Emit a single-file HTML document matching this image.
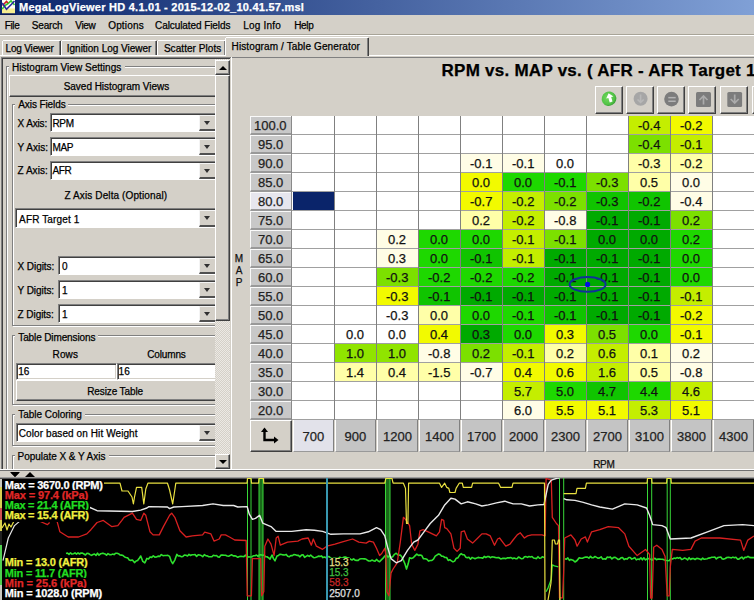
<!DOCTYPE html><html><head><meta charset="utf-8"><style>
*{box-sizing:border-box}
body{margin:0;width:754px;height:600px;overflow:hidden;background:#d4d0c8;font-family:"Liberation Sans",sans-serif;font-size:11px;color:#000;position:relative}
.a{position:absolute}
.t{position:absolute;white-space:nowrap;line-height:1;-webkit-text-stroke:0.25px currentColor}

</style></head><body>
<div class="a" style="left:0px;top:0px;width:754px;height:15px;background:linear-gradient(90deg,#0a246a 0%,#80a0d6 100%)"></div>
<svg class="a" style="left:0;top:0" width="17" height="15" viewBox="0 0 17 15">
<rect x="2" y="0" width="13" height="13.4" fill="#fffdf4"/>
<rect x="2" y="8.5" width="13" height="4.9" fill="#f6ee90"/>
<polyline points="2.2,9 5,5.5 8,3.5 11,0.8 14.5,5" fill="none" stroke="#30c830" stroke-width="1.6"/>
<polyline points="2.5,5.5 6.5,1.5 8,3" fill="none" stroke="#d02020" stroke-width="1.6"/>
<polyline points="2.2,3 6.5,9.3 11.5,4.2 14.5,1" fill="none" stroke="#2a2aa0" stroke-width="1.6"/>
<rect x="1.5" y="13.4" width="14" height="1.6" fill="#0a1a50"/>
</svg>
<div class="t" style="left:19.00px;top:2px;font-size:11px;font-weight:bold;color:#fff;letter-spacing:0.246px;">MegaLogViewer HD 4.1.01 - 2015-12-02_10.41.57.msl</div>
<div class="t" style="left:4.70px;top:21px;font-size:10px;color:#000;letter-spacing:-0.350px;">File</div>
<div class="t" style="left:31.80px;top:21px;font-size:10px;color:#000;letter-spacing:-0.160px;">Search</div>
<div class="t" style="left:75.30px;top:21px;font-size:10px;color:#000;letter-spacing:-0.350px;">View</div>
<div class="t" style="left:108.20px;top:21px;font-size:10px;color:#000;letter-spacing:0.167px;">Options</div>
<div class="t" style="left:155.10px;top:21px;font-size:10px;color:#000;letter-spacing:-0.088px;">Calculated Fields</div>
<div class="t" style="left:243.30px;top:21px;font-size:10px;color:#000;letter-spacing:0.186px;">Log Info</div>
<div class="t" style="left:294.20px;top:21px;font-size:10px;color:#000;letter-spacing:-0.350px;">Help</div>
<div class="a" style="left:0px;top:34px;width:754px;height:1px;background:#a8a498"></div>
<div class="a" style="left:0px;top:35px;width:754px;height:1px;background:#fff"></div>
<div class="a" style="left:3px;top:40px;width:57px;height:1px;background:#fff"></div>
<div class="a" style="left:2px;top:41px;width:1px;height:15px;background:#fff"></div>
<div class="a" style="left:60px;top:41px;width:1px;height:15px;background:#404040"></div>
<div class="a" style="left:59px;top:41px;width:1px;height:15px;background:#808080"></div>
<div class="t" style="left:5.50px;top:44px;font-size:10px;color:#000;letter-spacing:-0.167px;">Log Viewer</div>
<div class="a" style="left:62px;top:40px;width:94px;height:1px;background:#fff"></div>
<div class="a" style="left:61px;top:41px;width:1px;height:15px;background:#fff"></div>
<div class="a" style="left:156px;top:41px;width:1px;height:15px;background:#404040"></div>
<div class="a" style="left:155px;top:41px;width:1px;height:15px;background:#808080"></div>
<div class="t" style="left:66.80px;top:44px;font-size:10px;color:#000;letter-spacing:-0.017px;">Ignition Log Viewer</div>
<div class="a" style="left:158px;top:40px;width:67px;height:1px;background:#fff"></div>
<div class="a" style="left:157px;top:41px;width:1px;height:15px;background:#fff"></div>
<div class="a" style="left:225px;top:41px;width:1px;height:15px;background:#404040"></div>
<div class="a" style="left:224px;top:41px;width:1px;height:15px;background:#808080"></div>
<div class="t" style="left:163.90px;top:44px;font-size:10px;color:#000;letter-spacing:0.058px;">Scatter Plots</div>
<div class="a" style="left:0px;top:55px;width:754px;height:1px;background:#fff"></div>
<div class="a" style="left:225px;top:37px;width:144px;height:20px;background:#d4d0c8"></div>
<div class="a" style="left:226px;top:37px;width:142px;height:1px;background:#fff"></div>
<div class="a" style="left:225px;top:38px;width:1px;height:18px;background:#fff"></div>
<div class="a" style="left:368px;top:38px;width:1px;height:18px;background:#404040"></div>
<div class="a" style="left:367px;top:38px;width:1px;height:18px;background:#808080"></div>
<div class="t" style="left:231.60px;top:42px;font-size:10px;color:#000;letter-spacing:0.112px;">Histogram / Table Generator</div>
<div class="a" style="left:231px;top:57px;width:523px;height:1px;background:#808080"></div>
<div class="a" style="left:1px;top:57px;width:1px;height:413px;background:#808080"></div>
<div class="a" style="left:2px;top:58px;width:1px;height:412px;background:#404040"></div>
<div class="a" style="left:1px;top:57px;width:230px;height:1px;background:#808080"></div>
<div class="a" style="left:2px;top:58px;width:228px;height:1px;background:#404040"></div>
<div class="a" style="left:231px;top:57px;width:1px;height:413px;background:#fff"></div>
<div class="a" style="left:3px;top:59px;width:212px;height:410px;overflow:hidden">
<div class="a" style="left:-3px;top:-59px;width:300px;height:600px">
<div class="a" style="left:6px;top:66px;width:260px;height:500px;border:1px solid #808080;box-shadow:1px 1px 0 #fff, inset 1px 1px 0 #fff"></div>
<div class="a" style="left:9px;top:61px;width:115.5px;height:12px;background:#d4d0c8"></div>
<div class="t" style="left:12.00px;top:63px;font-size:10px;letter-spacing:0.023px;">Histogram View Settings</div>
<div class="a" style="left:9px;top:75px;width:215px;height:22px;background:#d4d0c8;border-top:1px solid #fff;border-left:1px solid #fff;border-right:1px solid #404040;border-bottom:1px solid #404040;box-shadow:inset -1px -1px 0 #808080"></div>
<div class="t" style="left:63.70px;top:82px;font-size:10px;letter-spacing:-0.025px;">Saved Histogram Views</div>
<div class="a" style="left:12px;top:104px;width:250px;height:222px;border:1px solid #808080;box-shadow:1px 1px 0 #fff, inset 1px 1px 0 #fff"></div>
<div class="a" style="left:15.3px;top:98px;width:53px;height:12px;background:#d4d0c8"></div>
<div class="t" style="left:18.30px;top:100px;font-size:10px;letter-spacing:-0.100px;">Axis Fields</div>
<div class="t" style="left:17.50px;top:119px;font-size:10px;letter-spacing:-0.133px;">X Axis:</div>
<div class="a" style="left:50px;top:113px;width:165px;height:19px;background:#fff;border-top:1px solid #808080;border-left:1px solid #808080;border-bottom:1px solid #fff;box-shadow:inset 1px 1px 0 #404040"></div>
<div class="a" style="left:199px;top:115px;width:16px;height:16px;background:#d4d0c8;border-top:1px solid #f4f4f4;border-left:1px solid #f4f4f4;border-bottom:2px solid #505050"></div>
<div class="a" style="left:203.5px;top:120.5px;width:0px;height:0px;border-left:3.5px solid transparent;border-right:3.5px solid transparent;border-top:4px solid #303030"></div>
<div class="t" style="left:52.50px;top:119px;font-size:10px;letter-spacing:-0.350px;">RPM</div>
<div class="t" style="left:17.50px;top:143px;font-size:10px;letter-spacing:0.033px;">Y Axis:</div>
<div class="a" style="left:50px;top:137px;width:165px;height:19px;background:#fff;border-top:1px solid #808080;border-left:1px solid #808080;border-bottom:1px solid #fff;box-shadow:inset 1px 1px 0 #404040"></div>
<div class="a" style="left:199px;top:139px;width:16px;height:16px;background:#d4d0c8;border-top:1px solid #f4f4f4;border-left:1px solid #f4f4f4;border-bottom:2px solid #505050"></div>
<div class="a" style="left:203.5px;top:144.5px;width:0px;height:0px;border-left:3.5px solid transparent;border-right:3.5px solid transparent;border-top:4px solid #303030"></div>
<div class="t" style="left:52.50px;top:143px;font-size:10px;letter-spacing:-0.350px;">MAP</div>
<div class="t" style="left:17.50px;top:166px;font-size:10px;letter-spacing:0.033px;">Z Axis:</div>
<div class="a" style="left:50px;top:161px;width:165px;height:19px;background:#fff;border-top:1px solid #808080;border-left:1px solid #808080;border-bottom:1px solid #fff;box-shadow:inset 1px 1px 0 #404040"></div>
<div class="a" style="left:199px;top:163px;width:16px;height:16px;background:#d4d0c8;border-top:1px solid #f4f4f4;border-left:1px solid #f4f4f4;border-bottom:2px solid #505050"></div>
<div class="a" style="left:203.5px;top:168.5px;width:0px;height:0px;border-left:3.5px solid transparent;border-right:3.5px solid transparent;border-top:4px solid #303030"></div>
<div class="t" style="left:52.50px;top:166px;font-size:10px;letter-spacing:-0.350px;">AFR</div>
<div class="t" style="left:64.50px;top:191px;font-size:10px;letter-spacing:0.114px;">Z Axis Delta (Optional)</div>
<div class="a" style="left:15px;top:208px;width:200px;height:20px;background:#fff;border-top:1px solid #808080;border-left:1px solid #808080;border-bottom:1px solid #fff;box-shadow:inset 1px 1px 0 #404040"></div>
<div class="a" style="left:199px;top:210px;width:16px;height:17px;background:#d4d0c8;border-top:1px solid #f4f4f4;border-left:1px solid #f4f4f4;border-bottom:2px solid #505050"></div>
<div class="a" style="left:203.5px;top:216.0px;width:0px;height:0px;border-left:3.5px solid transparent;border-right:3.5px solid transparent;border-top:4px solid #303030"></div>
<div class="t" style="left:19.10px;top:215px;font-size:10px;letter-spacing:0.136px;">AFR Target 1</div>
<div class="t" style="left:17.50px;top:262px;font-size:10px;letter-spacing:-0.050px;">X Digits:</div>
<div class="a" style="left:58px;top:256px;width:157px;height:19px;background:#fff;border-top:1px solid #808080;border-left:1px solid #808080;border-bottom:1px solid #fff;box-shadow:inset 1px 1px 0 #404040"></div>
<div class="a" style="left:199px;top:258px;width:16px;height:16px;background:#d4d0c8;border-top:1px solid #f4f4f4;border-left:1px solid #f4f4f4;border-bottom:2px solid #505050"></div>
<div class="a" style="left:203.5px;top:263.5px;width:0px;height:0px;border-left:3.5px solid transparent;border-right:3.5px solid transparent;border-top:4px solid #303030"></div>
<div class="t" style="left:62.00px;top:262px;font-size:10px;">0</div>
<div class="t" style="left:17.50px;top:286px;font-size:10px;letter-spacing:-0.050px;">Y Digits:</div>
<div class="a" style="left:58px;top:280px;width:157px;height:19px;background:#fff;border-top:1px solid #808080;border-left:1px solid #808080;border-bottom:1px solid #fff;box-shadow:inset 1px 1px 0 #404040"></div>
<div class="a" style="left:199px;top:282px;width:16px;height:16px;background:#d4d0c8;border-top:1px solid #f4f4f4;border-left:1px solid #f4f4f4;border-bottom:2px solid #505050"></div>
<div class="a" style="left:203.5px;top:287.5px;width:0px;height:0px;border-left:3.5px solid transparent;border-right:3.5px solid transparent;border-top:4px solid #303030"></div>
<div class="t" style="left:62.00px;top:286px;font-size:10px;">1</div>
<div class="t" style="left:17.50px;top:310px;font-size:10px;letter-spacing:-0.050px;">Z Digits:</div>
<div class="a" style="left:58px;top:304px;width:157px;height:19px;background:#fff;border-top:1px solid #808080;border-left:1px solid #808080;border-bottom:1px solid #fff;box-shadow:inset 1px 1px 0 #404040"></div>
<div class="a" style="left:199px;top:306px;width:16px;height:16px;background:#d4d0c8;border-top:1px solid #f4f4f4;border-left:1px solid #f4f4f4;border-bottom:2px solid #505050"></div>
<div class="a" style="left:203.5px;top:311.5px;width:0px;height:0px;border-left:3.5px solid transparent;border-right:3.5px solid transparent;border-top:4px solid #303030"></div>
<div class="t" style="left:62.00px;top:310px;font-size:10px;">1</div>
<div class="a" style="left:12px;top:335px;width:250px;height:70px;border:1px solid #808080;box-shadow:1px 1px 0 #fff, inset 1px 1px 0 #fff"></div>
<div class="a" style="left:15.3px;top:331px;width:83.2px;height:12px;background:#d4d0c8"></div>
<div class="t" style="left:18.30px;top:333px;font-size:10px;letter-spacing:-0.120px;">Table Dimensions</div>
<div class="t" style="left:52.50px;top:350px;font-size:10px;letter-spacing:0.167px;">Rows</div>
<div class="t" style="left:147.30px;top:350px;font-size:10px;letter-spacing:-0.150px;">Columns</div>
<div class="a" style="left:16px;top:363px;width:101px;height:17px;background:#fff;border-top:1px solid #808080;border-left:1px solid #808080;border-right:1px solid #fff;border-bottom:1px solid #fff;box-shadow:inset 1px 1px 0 #404040, inset -1px -1px 0 #d4d0c8"></div>
<div class="a" style="left:117px;top:363px;width:110px;height:17px;background:#fff;border-top:1px solid #808080;border-left:1px solid #808080;border-right:1px solid #fff;border-bottom:1px solid #fff;box-shadow:inset 1px 1px 0 #404040, inset -1px -1px 0 #d4d0c8"></div>
<div class="t" style="left:18.30px;top:367px;font-size:10px;">16</div>
<div class="t" style="left:118.60px;top:367px;font-size:10px;">16</div>
<div class="a" style="left:16px;top:380px;width:210px;height:21px;background:#d4d0c8;border-top:1px solid #fff;border-left:1px solid #fff;border-right:1px solid #404040;border-bottom:1px solid #404040;box-shadow:inset -1px -1px 0 #808080"></div>
<div class="t" style="left:87.20px;top:387px;font-size:10px;letter-spacing:-0.109px;">Resize Table</div>
<div class="a" style="left:12px;top:414px;width:250px;height:32px;border:1px solid #808080;box-shadow:1px 1px 0 #fff, inset 1px 1px 0 #fff"></div>
<div class="a" style="left:15.3px;top:408px;width:69.7px;height:12px;background:#d4d0c8"></div>
<div class="t" style="left:18.30px;top:410px;font-size:10px;letter-spacing:-0.023px;">Table Coloring</div>
<div class="a" style="left:16px;top:423px;width:199px;height:19px;background:#fff;border-top:1px solid #808080;border-left:1px solid #808080;border-bottom:1px solid #fff;box-shadow:inset 1px 1px 0 #404040"></div>
<div class="a" style="left:199px;top:425px;width:16px;height:16px;background:#d4d0c8;border-top:1px solid #f4f4f4;border-left:1px solid #f4f4f4;border-bottom:2px solid #505050"></div>
<div class="a" style="left:203.5px;top:430.5px;width:0px;height:0px;border-left:3.5px solid transparent;border-right:3.5px solid transparent;border-top:4px solid #303030"></div>
<div class="t" style="left:18.80px;top:429px;font-size:10px;letter-spacing:0.092px;">Color based on Hit Weight</div>
<div class="a" style="left:12px;top:455px;width:250px;height:60px;border:1px solid #808080;box-shadow:1px 1px 0 #fff, inset 1px 1px 0 #fff"></div>
<div class="a" style="left:14.5px;top:450px;width:94.3px;height:12px;background:#d4d0c8"></div>
<div class="t" style="left:17.50px;top:452px;font-size:10px;letter-spacing:-0.039px;">Populate X &amp; Y Axis</div>
</div></div>
<div class="a" style="left:215px;top:59px;width:15px;height:410px;background-color:#ece9e4;background-image:linear-gradient(45deg,#d4d0c8 25%,transparent 25%,transparent 75%,#d4d0c8 75%),linear-gradient(45deg,#d4d0c8 25%,transparent 25%,transparent 75%,#d4d0c8 75%);background-size:2px 2px;background-position:0 0,1px 1px"></div>
<div class="a" style="left:215px;top:60px;width:15px;height:15px;background:#d4d0c8;border-top:1px solid #fff;border-left:1px solid #fff;border-right:1px solid #404040;border-bottom:1px solid #404040;box-shadow:inset -1px -1px 0 #808080"></div>
<div class="a" style="left:218.5px;top:65.5px;width:0px;height:0px;border-left:4px solid transparent;border-right:4px solid transparent;border-bottom:4px solid #000"></div>
<div class="a" style="left:215px;top:75px;width:15px;height:246px;background:#d4d0c8;border-top:1px solid #fff;border-left:1px solid #fff;border-right:1px solid #404040;border-bottom:1px solid #404040;box-shadow:inset -1px -1px 0 #808080"></div>
<div class="a" style="left:215px;top:454px;width:15px;height:15px;background:#d4d0c8;border-top:1px solid #fff;border-left:1px solid #fff;border-right:1px solid #404040;border-bottom:1px solid #404040;box-shadow:inset -1px -1px 0 #808080"></div>
<div class="a" style="left:218.5px;top:459.5px;width:0px;height:0px;border-left:4px solid transparent;border-right:4px solid transparent;border-top:4px solid #000"></div>
<div class="t" style="left:441.60px;top:62px;font-size:17px;font-weight:bold;color:#000;letter-spacing:0.25px">RPM vs. MAP vs. ( AFR - AFR Target 1</div>
<div class="a" style="left:595px;top:86px;width:28px;height:28px;background:#d4d0c8;border-top:1px solid #fff;border-left:1px solid #fff;border-right:1px solid #404040;border-bottom:1px solid #404040;box-shadow:inset -1px -1px 0 #808080"></div>
<div class="a" style="left:626px;top:86px;width:28px;height:28px;background:#d4d0c8;border-top:1px solid #fff;border-left:1px solid #fff;border-right:1px solid #404040;border-bottom:1px solid #404040;box-shadow:inset -1px -1px 0 #808080"></div>
<div class="a" style="left:657px;top:86px;width:28px;height:28px;background:#d4d0c8;border-top:1px solid #fff;border-left:1px solid #fff;border-right:1px solid #404040;border-bottom:1px solid #404040;box-shadow:inset -1px -1px 0 #808080"></div>
<div class="a" style="left:688px;top:86px;width:28px;height:28px;background:#d4d0c8;border-top:1px solid #fff;border-left:1px solid #fff;border-right:1px solid #404040;border-bottom:1px solid #404040;box-shadow:inset -1px -1px 0 #808080"></div>
<div class="a" style="left:720px;top:86px;width:28px;height:28px;background:#d4d0c8;border-top:1px solid #fff;border-left:1px solid #fff;border-right:1px solid #404040;border-bottom:1px solid #404040;box-shadow:inset -1px -1px 0 #808080"></div>
<div class="a" style="left:752px;top:86px;width:28px;height:28px;background:#d4d0c8;border-top:1px solid #fff;border-left:1px solid #fff;border-right:1px solid #404040;border-bottom:1px solid #404040;box-shadow:inset -1px -1px 0 #808080"></div>
<svg class="a" style="left:0;top:0" width="754" height="120">
<defs><radialGradient id="gg" cx="0.45" cy="0.4" r="0.6"><stop offset="0" stop-color="#74d860"/><stop offset="0.75" stop-color="#52c446"/><stop offset="1" stop-color="#3a9e36"/></radialGradient></defs>
<ellipse cx="609" cy="98.7" rx="7.4" ry="7.1" transform="rotate(-30 609 98.7)" fill="url(#gg)"/>
<path d="M608.6,93.3 L613.4,96.4 L611.2,97.05 L612.5,101.55 L609.7,102.45 L608.4,97.95 L606.2,98.6 Z" fill="#fff"/>
<circle cx="640.6" cy="98.8" r="7" fill="#a6a6a6"/>
<path d="M640.6,94.5 L640.6,102 M637.5,99.5 L640.6,102.5 L643.7,99.5" fill="none" stroke="#b8b8b8" stroke-width="1.6"/>
<circle cx="671.5" cy="99.1" r="7.3" fill="#7c7c7c"/>
<rect x="668.3" y="96.9" width="7.4" height="1.5" fill="#b4b4b4"/><rect x="668.3" y="100.5" width="7.4" height="1.5" fill="#b4b4b4"/>
<rect x="696" y="92" width="15" height="15" rx="1.5" fill="#7c7c7c"/>
<path d="M703.5,96 L703.5,104.5 M699.5,100 L703.5,96 L707.5,100" fill="none" stroke="#ababab" stroke-width="1.7"/>
<rect x="727.3" y="92" width="14.8" height="15" rx="1.5" fill="#7c7c7c"/>
<path d="M734.7,94.5 L734.7,103 M730.7,99 L734.7,103 L738.7,99" fill="none" stroke="#ababab" stroke-width="1.7"/>
</svg>
<div class="a" style="left:292px;top:116px;width:462px;height:304px;background:#fff"></div>
<div class="a" style="left:628px;top:116px;width:42px;height:19px;background:#c4ee00"></div>
<div class="a" style="left:670px;top:116px;width:42px;height:19px;background:#f2fa00"></div>
<div class="a" style="left:628px;top:135px;width:42px;height:19px;background:#7ce000"></div>
<div class="a" style="left:670px;top:135px;width:42px;height:19px;background:#c4ee00"></div>
<div class="a" style="left:460px;top:154px;width:42px;height:19px;background:#fffde6"></div>
<div class="a" style="left:502px;top:154px;width:42px;height:19px;background:#fffde6"></div>
<div class="a" style="left:544px;top:154px;width:42px;height:19px;background:#ffffff"></div>
<div class="a" style="left:628px;top:154px;width:42px;height:19px;background:#ffffa8"></div>
<div class="a" style="left:670px;top:154px;width:42px;height:19px;background:#ffffa8"></div>
<div class="a" style="left:460px;top:173px;width:42px;height:19px;background:#f2fa00"></div>
<div class="a" style="left:502px;top:173px;width:42px;height:19px;background:#1ed800"></div>
<div class="a" style="left:544px;top:173px;width:42px;height:19px;background:#1ed800"></div>
<div class="a" style="left:586px;top:173px;width:42px;height:19px;background:#7ce000"></div>
<div class="a" style="left:628px;top:173px;width:42px;height:19px;background:#ffffa8"></div>
<div class="a" style="left:670px;top:173px;width:42px;height:19px;background:#fffde6"></div>
<div class="a" style="left:460px;top:192px;width:42px;height:19px;background:#f2fa00"></div>
<div class="a" style="left:502px;top:192px;width:42px;height:19px;background:#c4ee00"></div>
<div class="a" style="left:544px;top:192px;width:42px;height:19px;background:#7ce000"></div>
<div class="a" style="left:586px;top:192px;width:42px;height:19px;background:#10c400"></div>
<div class="a" style="left:628px;top:192px;width:42px;height:19px;background:#10c400"></div>
<div class="a" style="left:670px;top:192px;width:42px;height:19px;background:#fffde6"></div>
<div class="a" style="left:460px;top:211px;width:42px;height:19px;background:#ffffa8"></div>
<div class="a" style="left:502px;top:211px;width:42px;height:19px;background:#c4ee00"></div>
<div class="a" style="left:544px;top:211px;width:42px;height:19px;background:#fffde6"></div>
<div class="a" style="left:586px;top:211px;width:42px;height:19px;background:#00aa00"></div>
<div class="a" style="left:628px;top:211px;width:42px;height:19px;background:#00aa00"></div>
<div class="a" style="left:670px;top:211px;width:42px;height:19px;background:#7ce000"></div>
<div class="a" style="left:376px;top:230px;width:42px;height:19px;background:#fffde6"></div>
<div class="a" style="left:418px;top:230px;width:42px;height:19px;background:#1ed800"></div>
<div class="a" style="left:460px;top:230px;width:42px;height:19px;background:#1ed800"></div>
<div class="a" style="left:502px;top:230px;width:42px;height:19px;background:#c4ee00"></div>
<div class="a" style="left:544px;top:230px;width:42px;height:19px;background:#7ce000"></div>
<div class="a" style="left:586px;top:230px;width:42px;height:19px;background:#00aa00"></div>
<div class="a" style="left:628px;top:230px;width:42px;height:19px;background:#00aa00"></div>
<div class="a" style="left:670px;top:230px;width:42px;height:19px;background:#1ed800"></div>
<div class="a" style="left:376px;top:249px;width:42px;height:19px;background:#fffde6"></div>
<div class="a" style="left:418px;top:249px;width:42px;height:19px;background:#1ed800"></div>
<div class="a" style="left:460px;top:249px;width:42px;height:19px;background:#10c400"></div>
<div class="a" style="left:502px;top:249px;width:42px;height:19px;background:#c4ee00"></div>
<div class="a" style="left:544px;top:249px;width:42px;height:19px;background:#00aa00"></div>
<div class="a" style="left:586px;top:249px;width:42px;height:19px;background:#00aa00"></div>
<div class="a" style="left:628px;top:249px;width:42px;height:19px;background:#00aa00"></div>
<div class="a" style="left:670px;top:249px;width:42px;height:19px;background:#1ed800"></div>
<div class="a" style="left:376px;top:268px;width:42px;height:19px;background:#7ce000"></div>
<div class="a" style="left:418px;top:268px;width:42px;height:19px;background:#1ed800"></div>
<div class="a" style="left:460px;top:268px;width:42px;height:19px;background:#1ed800"></div>
<div class="a" style="left:502px;top:268px;width:42px;height:19px;background:#1ed800"></div>
<div class="a" style="left:544px;top:268px;width:42px;height:19px;background:#00aa00"></div>
<div class="a" style="left:586px;top:268px;width:42px;height:19px;background:#00aa00"></div>
<div class="a" style="left:628px;top:268px;width:42px;height:19px;background:#00aa00"></div>
<div class="a" style="left:670px;top:268px;width:42px;height:19px;background:#1ed800"></div>
<div class="a" style="left:376px;top:287px;width:42px;height:19px;background:#f2fa00"></div>
<div class="a" style="left:418px;top:287px;width:42px;height:19px;background:#10c400"></div>
<div class="a" style="left:460px;top:287px;width:42px;height:19px;background:#00aa00"></div>
<div class="a" style="left:502px;top:287px;width:42px;height:19px;background:#00aa00"></div>
<div class="a" style="left:544px;top:287px;width:42px;height:19px;background:#00aa00"></div>
<div class="a" style="left:586px;top:287px;width:42px;height:19px;background:#00aa00"></div>
<div class="a" style="left:628px;top:287px;width:42px;height:19px;background:#00aa00"></div>
<div class="a" style="left:670px;top:287px;width:42px;height:19px;background:#c4ee00"></div>
<div class="a" style="left:376px;top:306px;width:42px;height:19px;background:#ffffff"></div>
<div class="a" style="left:418px;top:306px;width:42px;height:19px;background:#ffffa8"></div>
<div class="a" style="left:460px;top:306px;width:42px;height:19px;background:#1ed800"></div>
<div class="a" style="left:502px;top:306px;width:42px;height:19px;background:#1ed800"></div>
<div class="a" style="left:544px;top:306px;width:42px;height:19px;background:#10c400"></div>
<div class="a" style="left:586px;top:306px;width:42px;height:19px;background:#00aa00"></div>
<div class="a" style="left:628px;top:306px;width:42px;height:19px;background:#00aa00"></div>
<div class="a" style="left:670px;top:306px;width:42px;height:19px;background:#f2fa00"></div>
<div class="a" style="left:334px;top:325px;width:42px;height:19px;background:#ffffff"></div>
<div class="a" style="left:376px;top:325px;width:42px;height:19px;background:#ffffff"></div>
<div class="a" style="left:418px;top:325px;width:42px;height:19px;background:#f2fa00"></div>
<div class="a" style="left:460px;top:325px;width:42px;height:19px;background:#00aa00"></div>
<div class="a" style="left:502px;top:325px;width:42px;height:19px;background:#1ed800"></div>
<div class="a" style="left:544px;top:325px;width:42px;height:19px;background:#f2fa00"></div>
<div class="a" style="left:586px;top:325px;width:42px;height:19px;background:#7ce000"></div>
<div class="a" style="left:628px;top:325px;width:42px;height:19px;background:#1ed800"></div>
<div class="a" style="left:670px;top:325px;width:42px;height:19px;background:#f2fa00"></div>
<div class="a" style="left:334px;top:344px;width:42px;height:19px;background:#90e400"></div>
<div class="a" style="left:376px;top:344px;width:42px;height:19px;background:#90e400"></div>
<div class="a" style="left:418px;top:344px;width:42px;height:19px;background:#fffde6"></div>
<div class="a" style="left:460px;top:344px;width:42px;height:19px;background:#7ce000"></div>
<div class="a" style="left:502px;top:344px;width:42px;height:19px;background:#c4ee00"></div>
<div class="a" style="left:544px;top:344px;width:42px;height:19px;background:#ffffa8"></div>
<div class="a" style="left:586px;top:344px;width:42px;height:19px;background:#c4ee00"></div>
<div class="a" style="left:628px;top:344px;width:42px;height:19px;background:#ffffa8"></div>
<div class="a" style="left:670px;top:344px;width:42px;height:19px;background:#fffde6"></div>
<div class="a" style="left:334px;top:363px;width:42px;height:19px;background:#ffffa8"></div>
<div class="a" style="left:376px;top:363px;width:42px;height:19px;background:#ffffa8"></div>
<div class="a" style="left:418px;top:363px;width:42px;height:19px;background:#ffffa8"></div>
<div class="a" style="left:460px;top:363px;width:42px;height:19px;background:#fffde6"></div>
<div class="a" style="left:502px;top:363px;width:42px;height:19px;background:#f2fa00"></div>
<div class="a" style="left:544px;top:363px;width:42px;height:19px;background:#f2fa00"></div>
<div class="a" style="left:586px;top:363px;width:42px;height:19px;background:#c4ee00"></div>
<div class="a" style="left:628px;top:363px;width:42px;height:19px;background:#ffffa8"></div>
<div class="a" style="left:670px;top:363px;width:42px;height:19px;background:#fffde6"></div>
<div class="a" style="left:502px;top:382px;width:42px;height:19px;background:#c4ee00"></div>
<div class="a" style="left:544px;top:382px;width:42px;height:19px;background:#1ed800"></div>
<div class="a" style="left:586px;top:382px;width:42px;height:19px;background:#10c400"></div>
<div class="a" style="left:628px;top:382px;width:42px;height:19px;background:#1ed800"></div>
<div class="a" style="left:670px;top:382px;width:42px;height:19px;background:#c4ee00"></div>
<div class="a" style="left:502px;top:401px;width:42px;height:19px;background:#fffde6"></div>
<div class="a" style="left:544px;top:401px;width:42px;height:19px;background:#f2fa00"></div>
<div class="a" style="left:586px;top:401px;width:42px;height:19px;background:#f2fa00"></div>
<div class="a" style="left:628px;top:401px;width:42px;height:19px;background:#c4ee00"></div>
<div class="a" style="left:670px;top:401px;width:42px;height:19px;background:#f2fa00"></div>
<div class="a" style="left:293px;top:192px;width:41px;height:18px;background:#0a246a"></div>
<div class="a" style="left:292px;top:134px;width:462px;height:1px;background:#a0a0a0"></div>
<div class="a" style="left:292px;top:153px;width:462px;height:1px;background:#a0a0a0"></div>
<div class="a" style="left:292px;top:172px;width:462px;height:1px;background:#a0a0a0"></div>
<div class="a" style="left:292px;top:191px;width:462px;height:1px;background:#a0a0a0"></div>
<div class="a" style="left:292px;top:210px;width:462px;height:1px;background:#a0a0a0"></div>
<div class="a" style="left:292px;top:229px;width:462px;height:1px;background:#a0a0a0"></div>
<div class="a" style="left:292px;top:248px;width:462px;height:1px;background:#a0a0a0"></div>
<div class="a" style="left:292px;top:267px;width:462px;height:1px;background:#a0a0a0"></div>
<div class="a" style="left:292px;top:286px;width:462px;height:1px;background:#a0a0a0"></div>
<div class="a" style="left:292px;top:305px;width:462px;height:1px;background:#a0a0a0"></div>
<div class="a" style="left:292px;top:324px;width:462px;height:1px;background:#a0a0a0"></div>
<div class="a" style="left:292px;top:343px;width:462px;height:1px;background:#a0a0a0"></div>
<div class="a" style="left:292px;top:362px;width:462px;height:1px;background:#a0a0a0"></div>
<div class="a" style="left:292px;top:381px;width:462px;height:1px;background:#a0a0a0"></div>
<div class="a" style="left:292px;top:400px;width:462px;height:1px;background:#a0a0a0"></div>
<div class="a" style="left:292px;top:419px;width:462px;height:1px;background:#a0a0a0"></div>
<div class="a" style="left:334px;top:116px;width:1px;height:304px;background:#808080"></div>
<div class="a" style="left:376px;top:116px;width:1px;height:304px;background:#808080"></div>
<div class="a" style="left:418px;top:116px;width:1px;height:304px;background:#808080"></div>
<div class="a" style="left:460px;top:116px;width:1px;height:304px;background:#808080"></div>
<div class="a" style="left:502px;top:116px;width:1px;height:304px;background:#808080"></div>
<div class="a" style="left:544px;top:116px;width:1px;height:304px;background:#808080"></div>
<div class="a" style="left:586px;top:116px;width:1px;height:304px;background:#808080"></div>
<div class="a" style="left:628px;top:116px;width:1px;height:304px;background:#808080"></div>
<div class="a" style="left:670px;top:116px;width:1px;height:304px;background:#808080"></div>
<div class="a" style="left:712px;top:116px;width:1px;height:304px;background:#808080"></div>
<div class="a" style="left:754px;top:116px;width:1px;height:304px;background:#808080"></div>
<div class="a" style="left:291px;top:116px;width:1px;height:304px;background:#8a8a8a"></div>
<div class="t" style="left:638.00px;top:119px;font-size:13px;color:#111;">-0.4</div>
<div class="t" style="left:680.00px;top:119px;font-size:13px;color:#111;">-0.2</div>
<div class="t" style="left:638.00px;top:138px;font-size:13px;color:#111;">-0.4</div>
<div class="t" style="left:680.00px;top:138px;font-size:13px;color:#111;">-0.1</div>
<div class="t" style="left:470.00px;top:157px;font-size:13px;color:#111;">-0.1</div>
<div class="t" style="left:512.00px;top:157px;font-size:13px;color:#111;">-0.1</div>
<div class="t" style="left:556.00px;top:157px;font-size:13px;color:#111;">0.0</div>
<div class="t" style="left:638.00px;top:157px;font-size:13px;color:#111;">-0.3</div>
<div class="t" style="left:680.00px;top:157px;font-size:13px;color:#111;">-0.2</div>
<div class="t" style="left:472.00px;top:176px;font-size:13px;color:#111;">0.0</div>
<div class="t" style="left:514.00px;top:176px;font-size:13px;color:#111;">0.0</div>
<div class="t" style="left:554.00px;top:176px;font-size:13px;color:#111;">-0.1</div>
<div class="t" style="left:596.00px;top:176px;font-size:13px;color:#111;">-0.3</div>
<div class="t" style="left:640.00px;top:176px;font-size:13px;color:#111;">0.5</div>
<div class="t" style="left:682.00px;top:176px;font-size:13px;color:#111;">0.0</div>
<div class="t" style="left:470.00px;top:195px;font-size:13px;color:#111;">-0.7</div>
<div class="t" style="left:512.00px;top:195px;font-size:13px;color:#111;">-0.2</div>
<div class="t" style="left:554.00px;top:195px;font-size:13px;color:#111;">-0.2</div>
<div class="t" style="left:596.00px;top:195px;font-size:13px;color:#111;">-0.3</div>
<div class="t" style="left:638.00px;top:195px;font-size:13px;color:#111;">-0.2</div>
<div class="t" style="left:680.00px;top:195px;font-size:13px;color:#111;">-0.4</div>
<div class="t" style="left:472.00px;top:214px;font-size:13px;color:#111;">0.2</div>
<div class="t" style="left:512.00px;top:214px;font-size:13px;color:#111;">-0.2</div>
<div class="t" style="left:554.00px;top:214px;font-size:13px;color:#111;">-0.8</div>
<div class="t" style="left:596.00px;top:214px;font-size:13px;color:#111;">-0.1</div>
<div class="t" style="left:638.00px;top:214px;font-size:13px;color:#111;">-0.1</div>
<div class="t" style="left:682.00px;top:214px;font-size:13px;color:#111;">0.2</div>
<div class="t" style="left:388.00px;top:233px;font-size:13px;color:#111;">0.2</div>
<div class="t" style="left:430.00px;top:233px;font-size:13px;color:#111;">0.0</div>
<div class="t" style="left:472.00px;top:233px;font-size:13px;color:#111;">0.0</div>
<div class="t" style="left:512.00px;top:233px;font-size:13px;color:#111;">-0.1</div>
<div class="t" style="left:554.00px;top:233px;font-size:13px;color:#111;">-0.1</div>
<div class="t" style="left:598.00px;top:233px;font-size:13px;color:#111;">0.0</div>
<div class="t" style="left:640.00px;top:233px;font-size:13px;color:#111;">0.0</div>
<div class="t" style="left:682.00px;top:233px;font-size:13px;color:#111;">0.2</div>
<div class="t" style="left:388.00px;top:252px;font-size:13px;color:#111;">0.3</div>
<div class="t" style="left:430.00px;top:252px;font-size:13px;color:#111;">0.0</div>
<div class="t" style="left:470.00px;top:252px;font-size:13px;color:#111;">-0.1</div>
<div class="t" style="left:512.00px;top:252px;font-size:13px;color:#111;">-0.1</div>
<div class="t" style="left:554.00px;top:252px;font-size:13px;color:#111;">-0.1</div>
<div class="t" style="left:596.00px;top:252px;font-size:13px;color:#111;">-0.1</div>
<div class="t" style="left:638.00px;top:252px;font-size:13px;color:#111;">-0.1</div>
<div class="t" style="left:682.00px;top:252px;font-size:13px;color:#111;">0.0</div>
<div class="t" style="left:386.00px;top:271px;font-size:13px;color:#111;">-0.3</div>
<div class="t" style="left:428.00px;top:271px;font-size:13px;color:#111;">-0.2</div>
<div class="t" style="left:470.00px;top:271px;font-size:13px;color:#111;">-0.2</div>
<div class="t" style="left:512.00px;top:271px;font-size:13px;color:#111;">-0.2</div>
<div class="t" style="left:554.00px;top:271px;font-size:13px;color:#111;">-0.1</div>
<div class="t" style="left:596.00px;top:271px;font-size:13px;color:#111;">-0.1</div>
<div class="t" style="left:638.00px;top:271px;font-size:13px;color:#111;">-0.1</div>
<div class="t" style="left:682.00px;top:271px;font-size:13px;color:#111;">0.0</div>
<div class="t" style="left:386.00px;top:290px;font-size:13px;color:#111;">-0.3</div>
<div class="t" style="left:428.00px;top:290px;font-size:13px;color:#111;">-0.1</div>
<div class="t" style="left:470.00px;top:290px;font-size:13px;color:#111;">-0.1</div>
<div class="t" style="left:512.00px;top:290px;font-size:13px;color:#111;">-0.1</div>
<div class="t" style="left:554.00px;top:290px;font-size:13px;color:#111;">-0.1</div>
<div class="t" style="left:596.00px;top:290px;font-size:13px;color:#111;">-0.1</div>
<div class="t" style="left:638.00px;top:290px;font-size:13px;color:#111;">-0.1</div>
<div class="t" style="left:680.00px;top:290px;font-size:13px;color:#111;">-0.1</div>
<div class="t" style="left:386.00px;top:309px;font-size:13px;color:#111;">-0.3</div>
<div class="t" style="left:430.00px;top:309px;font-size:13px;color:#111;">0.0</div>
<div class="t" style="left:472.00px;top:309px;font-size:13px;color:#111;">0.0</div>
<div class="t" style="left:512.00px;top:309px;font-size:13px;color:#111;">-0.1</div>
<div class="t" style="left:554.00px;top:309px;font-size:13px;color:#111;">-0.1</div>
<div class="t" style="left:596.00px;top:309px;font-size:13px;color:#111;">-0.1</div>
<div class="t" style="left:638.00px;top:309px;font-size:13px;color:#111;">-0.1</div>
<div class="t" style="left:680.00px;top:309px;font-size:13px;color:#111;">-0.2</div>
<div class="t" style="left:346.00px;top:328px;font-size:13px;color:#111;">0.0</div>
<div class="t" style="left:388.00px;top:328px;font-size:13px;color:#111;">0.0</div>
<div class="t" style="left:430.00px;top:328px;font-size:13px;color:#111;">0.4</div>
<div class="t" style="left:472.00px;top:328px;font-size:13px;color:#111;">0.3</div>
<div class="t" style="left:514.00px;top:328px;font-size:13px;color:#111;">0.0</div>
<div class="t" style="left:556.00px;top:328px;font-size:13px;color:#111;">0.3</div>
<div class="t" style="left:598.00px;top:328px;font-size:13px;color:#111;">0.5</div>
<div class="t" style="left:640.00px;top:328px;font-size:13px;color:#111;">0.0</div>
<div class="t" style="left:680.00px;top:328px;font-size:13px;color:#111;">-0.1</div>
<div class="t" style="left:346.00px;top:347px;font-size:13px;color:#111;">1.0</div>
<div class="t" style="left:388.00px;top:347px;font-size:13px;color:#111;">1.0</div>
<div class="t" style="left:428.00px;top:347px;font-size:13px;color:#111;">-0.8</div>
<div class="t" style="left:472.00px;top:347px;font-size:13px;color:#111;">0.2</div>
<div class="t" style="left:512.00px;top:347px;font-size:13px;color:#111;">-0.1</div>
<div class="t" style="left:556.00px;top:347px;font-size:13px;color:#111;">0.2</div>
<div class="t" style="left:598.00px;top:347px;font-size:13px;color:#111;">0.6</div>
<div class="t" style="left:640.00px;top:347px;font-size:13px;color:#111;">0.1</div>
<div class="t" style="left:682.00px;top:347px;font-size:13px;color:#111;">0.2</div>
<div class="t" style="left:346.00px;top:366px;font-size:13px;color:#111;">1.4</div>
<div class="t" style="left:388.00px;top:366px;font-size:13px;color:#111;">0.4</div>
<div class="t" style="left:428.00px;top:366px;font-size:13px;color:#111;">-1.5</div>
<div class="t" style="left:470.00px;top:366px;font-size:13px;color:#111;">-0.7</div>
<div class="t" style="left:514.00px;top:366px;font-size:13px;color:#111;">0.4</div>
<div class="t" style="left:556.00px;top:366px;font-size:13px;color:#111;">0.6</div>
<div class="t" style="left:598.00px;top:366px;font-size:13px;color:#111;">1.6</div>
<div class="t" style="left:640.00px;top:366px;font-size:13px;color:#111;">0.5</div>
<div class="t" style="left:680.00px;top:366px;font-size:13px;color:#111;">-0.8</div>
<div class="t" style="left:514.00px;top:385px;font-size:13px;color:#111;">5.7</div>
<div class="t" style="left:556.00px;top:385px;font-size:13px;color:#111;">5.0</div>
<div class="t" style="left:598.00px;top:385px;font-size:13px;color:#111;">4.7</div>
<div class="t" style="left:640.00px;top:385px;font-size:13px;color:#111;">4.4</div>
<div class="t" style="left:682.00px;top:385px;font-size:13px;color:#111;">4.6</div>
<div class="t" style="left:514.00px;top:404px;font-size:13px;color:#111;">6.0</div>
<div class="t" style="left:556.00px;top:404px;font-size:13px;color:#111;">5.5</div>
<div class="t" style="left:598.00px;top:404px;font-size:13px;color:#111;">5.1</div>
<div class="t" style="left:640.00px;top:404px;font-size:13px;color:#111;">5.3</div>
<div class="t" style="left:682.00px;top:404px;font-size:13px;color:#111;">5.1</div>
<div class="a" style="left:250px;top:116px;width:41px;height:19px;background:#c8c8c8;border-top:1px solid #fafafa;border-left:1px solid #fafafa;border-bottom:2px solid #999"></div>
<div class="t" style="left:254.00px;top:119px;font-size:13px;color:#222;">100.0</div>
<div class="a" style="left:250px;top:135px;width:41px;height:19px;background:#c8c8c8;border-top:1px solid #fafafa;border-left:1px solid #fafafa;border-bottom:2px solid #999"></div>
<div class="t" style="left:258.00px;top:138px;font-size:13px;color:#222;">95.0</div>
<div class="a" style="left:250px;top:154px;width:41px;height:19px;background:#c8c8c8;border-top:1px solid #fafafa;border-left:1px solid #fafafa;border-bottom:2px solid #999"></div>
<div class="t" style="left:258.00px;top:157px;font-size:13px;color:#222;">90.0</div>
<div class="a" style="left:250px;top:173px;width:41px;height:19px;background:#c8c8c8;border-top:1px solid #fafafa;border-left:1px solid #fafafa;border-bottom:2px solid #999"></div>
<div class="t" style="left:258.00px;top:176px;font-size:13px;color:#222;">85.0</div>
<div class="a" style="left:250px;top:192px;width:41px;height:19px;background:#e6e6ee;border-top:1px solid #fafafa;border-left:1px solid #fafafa;border-bottom:2px solid #999"></div>
<div class="t" style="left:258.00px;top:195px;font-size:13px;color:#222;">80.0</div>
<div class="a" style="left:250px;top:211px;width:41px;height:19px;background:#c8c8c8;border-top:1px solid #fafafa;border-left:1px solid #fafafa;border-bottom:2px solid #999"></div>
<div class="t" style="left:258.00px;top:214px;font-size:13px;color:#222;">75.0</div>
<div class="a" style="left:250px;top:230px;width:41px;height:19px;background:#c8c8c8;border-top:1px solid #fafafa;border-left:1px solid #fafafa;border-bottom:2px solid #999"></div>
<div class="t" style="left:258.00px;top:233px;font-size:13px;color:#222;">70.0</div>
<div class="a" style="left:250px;top:249px;width:41px;height:19px;background:#c8c8c8;border-top:1px solid #fafafa;border-left:1px solid #fafafa;border-bottom:2px solid #999"></div>
<div class="t" style="left:258.00px;top:252px;font-size:13px;color:#222;">65.0</div>
<div class="a" style="left:250px;top:268px;width:41px;height:19px;background:#c8c8c8;border-top:1px solid #fafafa;border-left:1px solid #fafafa;border-bottom:2px solid #999"></div>
<div class="t" style="left:258.00px;top:271px;font-size:13px;color:#222;">60.0</div>
<div class="a" style="left:250px;top:287px;width:41px;height:19px;background:#c8c8c8;border-top:1px solid #fafafa;border-left:1px solid #fafafa;border-bottom:2px solid #999"></div>
<div class="t" style="left:258.00px;top:290px;font-size:13px;color:#222;">55.0</div>
<div class="a" style="left:250px;top:306px;width:41px;height:19px;background:#c8c8c8;border-top:1px solid #fafafa;border-left:1px solid #fafafa;border-bottom:2px solid #999"></div>
<div class="t" style="left:258.00px;top:309px;font-size:13px;color:#222;">50.0</div>
<div class="a" style="left:250px;top:325px;width:41px;height:19px;background:#c8c8c8;border-top:1px solid #fafafa;border-left:1px solid #fafafa;border-bottom:2px solid #999"></div>
<div class="t" style="left:258.00px;top:328px;font-size:13px;color:#222;">45.0</div>
<div class="a" style="left:250px;top:344px;width:41px;height:19px;background:#c8c8c8;border-top:1px solid #fafafa;border-left:1px solid #fafafa;border-bottom:2px solid #999"></div>
<div class="t" style="left:258.00px;top:347px;font-size:13px;color:#222;">40.0</div>
<div class="a" style="left:250px;top:363px;width:41px;height:19px;background:#c8c8c8;border-top:1px solid #fafafa;border-left:1px solid #fafafa;border-bottom:2px solid #999"></div>
<div class="t" style="left:258.00px;top:366px;font-size:13px;color:#222;">35.0</div>
<div class="a" style="left:250px;top:382px;width:41px;height:19px;background:#c8c8c8;border-top:1px solid #fafafa;border-left:1px solid #fafafa;border-bottom:2px solid #999"></div>
<div class="t" style="left:258.00px;top:385px;font-size:13px;color:#222;">30.0</div>
<div class="a" style="left:250px;top:401px;width:41px;height:19px;background:#c8c8c8;border-top:1px solid #fafafa;border-left:1px solid #fafafa;border-bottom:2px solid #999"></div>
<div class="t" style="left:258.00px;top:404px;font-size:13px;color:#222;">20.0</div>
<div class="a" style="left:293px;top:420px;width:41px;height:32px;background:#e2e2ea;border-left:1px solid #fff;border-right:1px solid #808080;border-bottom:1px solid #999"></div>
<div class="t" style="left:302.50px;top:430px;font-size:13px;color:#222;">700</div>
<div class="a" style="left:335px;top:420px;width:41px;height:32px;background:#c4c4c4;border-left:1px solid #fff;border-right:1px solid #808080;border-bottom:1px solid #999"></div>
<div class="t" style="left:344.50px;top:430px;font-size:13px;color:#222;">900</div>
<div class="a" style="left:377px;top:420px;width:41px;height:32px;background:#c4c4c4;border-left:1px solid #fff;border-right:1px solid #808080;border-bottom:1px solid #999"></div>
<div class="t" style="left:383.00px;top:430px;font-size:13px;color:#222;">1200</div>
<div class="a" style="left:419px;top:420px;width:41px;height:32px;background:#c4c4c4;border-left:1px solid #fff;border-right:1px solid #808080;border-bottom:1px solid #999"></div>
<div class="t" style="left:425.00px;top:430px;font-size:13px;color:#222;">1400</div>
<div class="a" style="left:461px;top:420px;width:41px;height:32px;background:#c4c4c4;border-left:1px solid #fff;border-right:1px solid #808080;border-bottom:1px solid #999"></div>
<div class="t" style="left:467.00px;top:430px;font-size:13px;color:#222;">1700</div>
<div class="a" style="left:503px;top:420px;width:41px;height:32px;background:#c4c4c4;border-left:1px solid #fff;border-right:1px solid #808080;border-bottom:1px solid #999"></div>
<div class="t" style="left:509.00px;top:430px;font-size:13px;color:#222;">2000</div>
<div class="a" style="left:545px;top:420px;width:41px;height:32px;background:#c4c4c4;border-left:1px solid #fff;border-right:1px solid #808080;border-bottom:1px solid #999"></div>
<div class="t" style="left:551.00px;top:430px;font-size:13px;color:#222;">2300</div>
<div class="a" style="left:587px;top:420px;width:41px;height:32px;background:#c4c4c4;border-left:1px solid #fff;border-right:1px solid #808080;border-bottom:1px solid #999"></div>
<div class="t" style="left:593.00px;top:430px;font-size:13px;color:#222;">2700</div>
<div class="a" style="left:629px;top:420px;width:41px;height:32px;background:#c4c4c4;border-left:1px solid #fff;border-right:1px solid #808080;border-bottom:1px solid #999"></div>
<div class="t" style="left:635.00px;top:430px;font-size:13px;color:#222;">3100</div>
<div class="a" style="left:671px;top:420px;width:41px;height:32px;background:#c4c4c4;border-left:1px solid #fff;border-right:1px solid #808080;border-bottom:1px solid #999"></div>
<div class="t" style="left:677.00px;top:430px;font-size:13px;color:#222;">3800</div>
<div class="a" style="left:713px;top:420px;width:41px;height:32px;background:#c4c4c4;border-left:1px solid #fff;border-right:1px solid #808080;border-bottom:1px solid #999"></div>
<div class="t" style="left:719.00px;top:430px;font-size:13px;color:#222;">4300</div>
<div class="a" style="left:250px;top:420px;width:42px;height:32px;background:#d4d0c8;border-top:1px solid #fff;border-left:1px solid #fff;border-right:1px solid #404040;border-bottom:1px solid #404040;box-shadow:inset -1px -1px 0 #808080"></div>
<svg class="a" style="left:250px;top:420px" width="42" height="32"><path d="M14.5,9 L14.5,20 L25,20" fill="none" stroke="#000" stroke-width="2.4"/><path d="M11,12 L14.5,7.5 L18,12 Z" fill="#000"/><path d="M24,16.5 L28.5,20 L24,23.5 Z" fill="#000"/></svg>
<div class="t" style="left:234.80px;top:254px;font-size:10px;color:#111;">M</div>
<div class="t" style="left:235.80px;top:266px;font-size:10px;color:#111;">A</div>
<div class="t" style="left:235.80px;top:278px;font-size:10px;color:#111;">P</div>
<div class="t" style="left:593.20px;top:460px;font-size:10px;color:#111;letter-spacing:-0.350px;">RPM</div>
<svg class="a" style="left:560px;top:270px" width="60" height="30"><ellipse cx="27.6" cy="14.4" rx="18" ry="7.3" fill="none" stroke="#10309a" stroke-width="2"/><circle cx="27.6" cy="14.4" r="2.6" fill="#0010e0"/></svg>
<div class="a" style="left:0px;top:469px;width:754px;height:1px;background:#fff"></div>
<div class="a" style="left:0px;top:470px;width:754px;height:1px;background:#707070"></div>
<div class="a" style="left:11px;top:472.5px;width:0px;height:0px;border-left:4px solid transparent;border-right:4px solid transparent;border-top:4px solid #000"></div>
<div class="a" style="left:25px;top:472px;width:0px;height:0px;border-left:5px solid transparent;border-right:5px solid transparent;border-bottom:5px solid #000"></div>
<div class="a" style="left:10px;top:472px;width:0px;height:0px;border-left:5px solid transparent;border-right:5px solid transparent;border-top:5px solid #000"></div>
<div class="a" style="left:0px;top:477px;width:754px;height:1px;background:#9c9c9c"></div>
<div class="a" style="left:0px;top:478px;width:754px;height:1px;background:#505050"></div>
<div class="a" style="left:0px;top:479px;width:754px;height:121px;background:#000"></div>
<div class="a" style="left:0px;top:479px;width:2px;height:121px;background:#c8c8c0"></div>
<div class="a" style="left:0px;top:487px;width:2px;height:44px;background:#d8d050"></div>
<div class="a" style="left:0px;top:508px;width:2px;height:12px;background:#d05050"></div>
<div class="a" style="left:0px;top:531px;width:2px;height:14px;background:#202020"></div>
<div class="a" style="left:0px;top:545px;width:2px;height:40px;background:#50d050"></div>
<svg class="a" style="left:0;top:0" width="754" height="600"><defs><clipPath id="cc"><rect x="2" y="478" width="752" height="122"/></clipPath></defs><g clip-path="url(#cc)" fill="none" stroke-linejoin="round">
<rect x="259" y="478" width="4" height="122" fill="#1a6a1a"/>
<rect x="385.5" y="478" width="4.5" height="122" fill="#1a6a1a"/>
<line x1="247.5" y1="478" x2="247.5" y2="600" stroke="#38d838" stroke-width="1"/>
<line x1="251" y1="478" x2="251" y2="600" stroke="#38d838" stroke-width="1"/>
<line x1="259" y1="478" x2="259" y2="600" stroke="#38d838" stroke-width="1"/>
<line x1="263" y1="478" x2="263" y2="600" stroke="#38d838" stroke-width="1"/>
<line x1="385.5" y1="478" x2="385.5" y2="600" stroke="#38d838" stroke-width="1"/>
<line x1="390" y1="478" x2="390" y2="600" stroke="#38d838" stroke-width="1"/>
<line x1="559.5" y1="478" x2="559.5" y2="600" stroke="#38d838" stroke-width="1"/>
<line x1="563.7" y1="478" x2="563.7" y2="600" stroke="#38d838" stroke-width="1"/>
<line x1="647.5" y1="478" x2="647.5" y2="600" stroke="#38d838" stroke-width="1"/>
<line x1="651.7" y1="478" x2="651.7" y2="600" stroke="#38d838" stroke-width="1"/>
<line x1="667.2" y1="478" x2="667.2" y2="600" stroke="#38d838" stroke-width="1"/>
<line x1="670.3" y1="478" x2="670.3" y2="600" stroke="#38d838" stroke-width="1"/>
<polyline points="66.0,553.5 67.5,553.1 69.0,554.4 70.5,552.9 72.0,554.1 73.5,553.7 75.0,552.9 76.5,554.1 78.0,552.9 79.5,554.0 81.0,553.0 82.5,553.1 84.0,554.0 85.5,555.0 87.0,553.2 88.5,553.5 90.0,554.6 91.5,555.4 93.0,554.5 94.5,554.0 96.0,555.5 97.5,553.1 99.0,555.2 100.5,553.8 102.0,553.4 103.5,553.4 105.0,553.9 106.5,555.2 108.0,553.6 109.5,554.6 111.0,554.8 112.5,554.1 114.0,554.6 115.5,553.3 117.0,553.3 118.5,553.7 120.0,555.0 121.5,555.1 123.1,555.6 124.7,557.0 126.2,557.5 127.8,557.9 129.3,559.9 130.8,560.4 132.4,560.0 134.5,562.6 136.1,561.0 137.6,560.5 139.1,558.6 140.7,556.0 142.8,561.4 144.8,562.8 146.9,558.4 148.5,558.9 150.1,556.9 151.7,557.4 153.3,555.8 154.9,557.1 156.5,557.0 158.1,556.1 159.7,556.5 161.3,554.6 163.0,555.7 164.6,555.5 166.3,555.5 167.9,555.3 169.6,556.4 171.1,560.8 172.7,563.7 174.8,560.1 176.8,554.4 178.3,556.0 179.9,555.9 181.4,556.8 182.9,556.4 184.4,555.0 186.0,555.3 187.5,556.0 189.0,554.4 190.5,555.5 192.1,554.8 193.6,554.7 195.1,554.5 196.6,556.4 198.2,554.7 199.7,555.1 201.2,555.5 202.7,556.7 204.3,554.7 205.8,555.7 207.3,555.9 208.8,556.8 210.4,556.7 211.9,556.8 213.4,555.3 215.0,555.7 216.5,555.5 218.0,556.9 219.5,557.1 221.1,555.0 222.6,555.1 224.1,555.3 225.6,555.3 227.2,556.0 228.7,556.2 230.2,555.4 231.7,554.8 233.3,555.9 234.8,555.7 236.3,556.3 237.8,557.3 239.4,556.6 240.9,556.2 242.4,556.5 243.9,556.6 245.5,555.0 247.0,557.2 248.7,556.9 250.3,557.0 252.0,556.8 253.5,555.7 255.0,555.7 256.5,555.0 258.0,556.3 259.5,554.9 261.0,554.9 262.5,555.2 264.0,555.1 265.5,556.6 267.0,556.8 268.5,557.7 270.0,559.1 272.0,555.0 273.5,558.6 275.0,560.8 277.0,556.0 278.5,555.4 280.1,554.2 281.6,554.5 283.1,554.9 284.7,555.0 286.2,554.4 287.7,556.3 289.2,556.8 290.8,555.5 292.3,555.6 293.8,554.6 295.4,554.7 296.9,555.4 298.4,555.3 300.0,556.8 301.5,555.1 303.0,554.8 304.6,557.3 306.1,556.3 307.6,555.3 309.2,556.4 310.7,555.1 312.2,556.5 313.8,557.7 315.3,557.5 316.8,557.1 318.3,556.1 319.9,556.4 321.4,555.9 322.9,557.6 324.5,557.0 326.0,557.7 327.5,556.7 329.1,556.5 330.6,558.1 332.1,558.7 333.7,558.4 335.2,558.4 336.7,558.6 338.3,558.5 339.8,557.2 341.3,558.1 342.8,557.8 344.4,557.0 345.9,557.1 347.4,557.9 349.0,558.0 350.5,559.2 352.0,560.0 353.6,558.8 355.1,560.1 356.6,560.4 358.2,560.4 359.7,559.0 361.2,558.7 362.8,558.8 364.3,558.9 365.8,559.0 367.3,560.2 368.9,561.0 370.4,561.0 371.9,560.1 373.5,560.7 375.0,561.2 376.5,559.4 378.1,561.0 379.6,561.8 381.3,559.9 383.1,558.2 384.8,555.9 386.4,555.3 387.9,557.1 389.4,556.0 391.0,557.4 392.7,556.8 394.5,554.3 396.2,553.2 398.2,555.2 400.3,555.1 401.9,557.0 403.4,560.3 404.9,563.7 406.5,569.1 408.1,564.1 409.6,557.7 411.4,558.4 413.2,557.8 415.0,555.9 416.8,554.1 418.5,555.4 420.1,555.1 421.8,555.6 423.5,558.8 425.2,558.8 426.9,559.2 428.5,561.1 430.2,560.5 431.9,560.4 433.5,559.1 435.2,556.2 436.8,555.1 438.5,554.0 440.1,554.6 441.7,556.3 443.3,556.3 444.9,557.5 446.6,557.5 448.2,560.4 449.8,559.7 451.4,560.8 453.0,561.9 454.6,561.1 456.3,558.2 457.9,557.9 459.6,555.1 461.2,553.6 462.8,554.8 464.3,554.8 465.8,557.2 467.4,557.8 468.9,557.2 470.5,559.2 472.0,557.4 473.5,558.1 475.1,558.7 476.6,558.1 478.1,557.4 479.7,557.8 481.2,557.8 482.7,558.3 484.2,556.4 485.8,557.5 487.3,556.6 488.8,556.5 490.4,557.7 491.9,556.9 493.4,557.0 495.0,557.4 496.5,557.7 498.6,557.5 500.7,558.9 502.4,558.4 504.1,558.3 505.9,558.6 507.6,557.8 509.3,557.9 511.0,557.5 512.5,558.7 514.0,558.1 515.5,558.6 517.0,558.7 518.5,557.0 520.0,557.8 521.5,558.8 523.0,558.5 524.5,556.7 526.0,556.6 527.5,557.4 529.0,556.5 530.5,556.9 532.0,556.5 533.5,558.0 535.0,558.3 536.5,558.6 538.0,556.7 539.5,558.2 541.0,558.0 542.5,556.7 544.0,557.6" stroke="#2ee02e" stroke-width="1.6"/>
<polyline points="546.1,591.7 548.2,587.6 551.3,579.3 552.3,564.8 554.4,565.9 558.5,566.9" stroke="#2ee02e" stroke-width="1.3"/>
<polyline points="564.7,558.6 566.2,559.3 567.8,557.9 569.4,560.4 570.9,559.4 573.0,560.2 575.0,562.0 577.1,560.5 579.2,557.7 580.8,558.2 582.5,558.2 584.1,557.6 585.8,557.0 587.4,557.1 588.9,558.2 590.5,556.4 592.0,557.8 593.5,557.6 595.0,556.5 596.6,557.4 598.1,558.2 599.6,557.9 601.2,556.8 602.7,559.2 604.2,558.7 605.7,559.3 607.3,557.0 608.8,557.5 610.3,556.9 611.9,558.9 613.4,557.6 614.9,557.3 616.4,558.1 618.0,559.4 619.5,559.2 621.0,557.8 622.5,557.5 624.1,559.6 625.6,558.7 627.1,559.1 628.7,557.5 630.2,557.5 631.7,559.1 633.2,558.5 634.8,557.6 636.3,559.9 637.8,559.1 639.4,559.6 640.9,557.8 642.4,559.8 643.9,557.8 645.5,559.9 647.0,558.9 648.7,558.6 650.3,559.1 652.0,560.1 653.5,558.6 655.0,558.4 656.5,559.7 658.0,559.1 659.5,559.0 661.0,559.3 662.5,559.2 664.0,559.8 665.5,560.3 667.0,560.5 669.0,560.7 671.0,558.5 672.5,559.0 674.0,558.1 675.5,558.5 677.0,557.6 678.5,558.2 680.1,557.6 681.6,559.4 683.1,558.9 684.6,558.0 686.1,558.7 687.6,559.9 689.1,557.7 690.6,559.5 692.1,558.5 693.6,558.6 695.1,559.5 696.7,558.3 698.2,558.6 699.7,559.0 701.2,559.7 702.7,558.1 704.2,559.3 705.7,559.0 707.2,558.7 708.7,558.1 710.2,557.9 711.7,557.2 713.3,557.3 714.8,557.1 716.3,558.9 717.8,557.6 719.3,557.3 720.8,557.1 722.3,559.0 723.8,559.1 725.3,558.5 726.8,557.5 728.3,557.4 729.9,557.5 731.4,557.9 732.9,557.1 734.4,557.8 735.9,557.3 737.4,559.1 738.9,559.1 740.4,558.0 741.9,557.1 743.4,559.0 744.9,557.3 746.5,557.4 748.0,556.4 749.5,557.4 751.0,557.6 752.5,557.6 754.0,557.6" stroke="#2ee02e" stroke-width="1.6"/>
<polyline points="40.3,521.5 47.5,524.6 49.6,522.5" stroke="#d82020" stroke-width="1.3"/>
<polyline points="56.8,520.4 59.9,531.8 68.2,537.0 78.5,537.0 86.8,533.9 90.9,529.7 97.1,522.5 103.3,520.4 111.6,526.6 117.8,525.6 121.9,520.4 124.1,517.3 132.4,513.2 136.5,519.4 140.7,520.4 143.8,513.2 145.8,515.3 150.0,531.8 153.1,534.9 159.3,534.9 163.4,526.6 169.6,515.3 171.7,513.2 174.8,517.3 179.9,530.8 186.1,537.0 192.3,535.9 202.6,534.9 204.7,532.2 210.9,533.9 214.0,541.1 219.2,539.0 221.2,534.9 225.4,534.9 229.5,537.0 234.7,540.0 246.2,540.5 247.2,595.8 251.4,595.8 252.4,558.6 260.7,558.6 261.7,595.8 263.8,591.7 264.8,546.2 267.9,539.0 271.0,544.2 274.1,555.5 276.2,538.0 278.2,536.3 280.3,545.2 287.5,542.1 297.9,541.1 302.0,539.0 308.2,538.0 311.3,545.2 313.3,539.0 316.4,546.2 322.6,549.3 326.8,546.2 335.0,544.2 343.3,541.7 352.6,539.0 358.8,542.1 366.2,543.1 369.3,541.1 373.4,542.1 376.5,548.3 379.6,555.5 381.7,553.5 384.8,548.3 385.8,554.0 386.9,591.7 388.9,595.8 391.0,573.1 393.1,569.0 397.2,562.8 400.3,542.1 403.4,517.3 405.5,519.4 409.6,525.6 411.7,544.2 414.8,550.4 417.9,544.2 419.9,530.8 423.0,529.7 428.2,531.8 436.4,535.9 439.5,531.8 441.6,519.4 443.7,520.4 444.7,527.7 446.8,528.7 450.9,533.9 454.0,548.3 457.1,551.4 460.2,548.3 461.2,531.8 464.3,530.8 467.4,539.0 472.6,543.1 477.8,538.0 481.9,533.9 486.2,533.9 490.3,535.9 494.5,545.2 497.6,539.0 499.6,538.0 502.7,542.1 505.8,546.2 510.0,544.2 513.1,540.0 517.2,534.9 520.3,532.8 524.4,538.0 527.5,535.9 531.7,534.9 542.0,534.9 545.1,535.9 546.1,478.5 551.3,480.1 552.3,517.3 556.4,523.5 558.5,525.6 559.5,597.9 562.6,597.9 563.7,571.0 564.7,538.0 570.9,534.9 575.0,540.0 577.1,546.2 581.2,539.0 585.4,536.9 587.4,542.1 591.6,531.8 599.8,529.7 608.3,526.6 618.6,527.7 624.8,533.9 628.9,546.3 637.2,555.6 645.5,549.4 649.6,554.5 650.6,598.0 652.1,598.0 653.7,547.3 656.8,545.2 662.0,549.4 665.1,556.6 667.2,595.9 669.2,595.9 670.3,567.0 672.3,549.4 682.7,550.4 690.9,549.4 695.1,541.1 701.3,538.0 719.9,538.0 740.6,540.1 743.7,550.4 747.8,540.1 754.0,536.0" stroke="#d82020" stroke-width="1.3"/>
<polyline points="3.0,560.7 8.3,538.0 14.5,525.6 20.7,520.4 30.0,515.0" stroke="#e8e8e8" stroke-width="1.2"/>
<polyline points="88.8,507.0 97.1,510.7 132.4,511.5 140.7,510.1 146.9,508.0 148.9,506.6 167.5,507.0 169.6,508.6 173.7,507.0 182.0,506.6 202.6,505.5 213.0,503.9 223.3,505.5 233.6,505.5 237.8,507.0 247.2,506.6 249.3,514.2 252.4,519.4 255.5,518.4 259.6,515.3 262.7,523.1 271.0,526.6 276.2,531.4 291.7,531.4 306.1,529.7 314.4,530.2 322.6,531.4 330.9,534.3 343.3,533.9 360.0,533.9 368.3,531.8 376.5,527.7 380.7,529.7 384.8,535.9 387.9,548.3 391.0,558.6 396.2,562.8 401.3,560.7 407.5,550.4 413.7,542.1 417.9,540.0 424.0,531.8 430.2,523.5 438.5,515.3 444.7,504.9 450.9,498.3 455.0,499.1 461.2,503.9 467.4,501.8 475.7,503.9 481.9,506.0 488.3,504.9 496.5,502.9 504.8,501.2 513.1,503.9 521.3,503.9 529.6,506.0 537.9,504.9 544.0,504.5 548.2,484.3 551.3,480.1 557.5,478.1 559.5,478.1" stroke="#e8e8e8" stroke-width="1.4"/>
<polyline points="563.7,498.7 566.8,499.8 575.0,500.4 583.3,502.4 591.6,504.9 599.8,507.0 612.4,509.1 624.8,503.9 637.2,504.9 646.5,508.0 649.6,515.3 652.7,524.6 662.0,525.6 666.1,527.7 670.3,539.0 691.0,538.0 707.5,531.8 724.0,525.6 742.6,524.6 754.0,525.6" stroke="#e8e8e8" stroke-width="1.4"/>
<polyline points="86.0,483.2 120.0,483.2 122.0,491.0 128.0,491.0 132.0,497.0 133.4,504.0 134.5,497.0 136.5,487.4 141.7,487.4 143.8,504.0 145.8,489.0 147.9,483.2 167.5,483.2 169.6,490.0 172.7,504.0 174.8,490.0 175.8,483.2 247.0,483.2 247.5,478.5 251.0,478.5 251.5,483.2 258.6,483.2 259.0,478.5 263.5,478.5 263.8,483.2 384.8,483.2 385.8,478.5 392.0,478.5 393.1,483.2 403.4,483.2 405.5,488.4 406.5,523.5 407.9,523.5 408.6,483.2 439.5,483.2 441.6,487.4 444.7,483.2 446.8,487.4 448.8,488.4 449.9,492.5 455.0,492.5 456.1,488.4 459.2,483.2 462.3,483.2 463.3,487.4 471.6,487.4 472.6,483.2 498.6,483.2 500.7,487.4 512.0,487.4 513.0,483.2 544.5,483.2 545.0,600.0" stroke="#e8e040" stroke-width="1.2"/>
<polyline points="548.0,600.0 551.0,583.0 552.3,540.0 554.4,540.0 555.4,544.0 557.5,544.0 558.5,540.0 559.5,540.0 560.0,600.0" stroke="#e8e040" stroke-width="1.2"/>
<polyline points="563.7,493.6 576.0,493.6 577.0,488.4 585.4,488.4 586.4,483.2 647.0,483.2 647.5,478.5 651.7,478.5 652.0,483.2 666.6,483.2 667.0,478.5 671.0,478.5 671.3,483.2 754.0,483.2" stroke="#e8e040" stroke-width="1.2"/>
<polyline points="2.0,528.0 5.0,523.0 7.0,530.0 9.0,524.0 11.0,527.0 14.0,521.0" stroke="#e8e040" stroke-width="1.2"/>
<rect x="326" y="478" width="2" height="122" fill="#3898b0" stroke="none"/>
</g></svg>
<div class="t" style="left:5.80px;top:480px;font-size:11px;font-weight:bold;color:#ffffff;letter-spacing:-0.259px;background:#000;padding:0 1px 1px 0;margin-left:-1px">Max = 3670.0 (RPM)</div>
<div class="t" style="left:5.80px;top:490px;font-size:11px;font-weight:bold;color:#e02828;letter-spacing:-0.133px;background:#000;padding:0 1px 1px 0;margin-left:-1px">Max = 97.4 (kPa)</div>
<div class="t" style="left:5.80px;top:500px;font-size:11px;font-weight:bold;color:#22dd22;letter-spacing:-0.287px;background:#000;padding:0 1px 1px 0;margin-left:-1px">Max = 21.4 (AFR)</div>
<div class="t" style="left:5.80px;top:510px;font-size:11px;font-weight:bold;color:#f0f040;letter-spacing:-0.287px;background:#000;padding:0 1px 1px 0;margin-left:-1px">Max = 15.4 (AFR)</div>
<div class="t" style="left:5.80px;top:557px;font-size:11px;font-weight:bold;color:#f0f040;letter-spacing:-0.207px;background:#000;padding:0 1px 1px 0;margin-left:-1px">Min = 13.0 (AFR)</div>
<div class="t" style="left:5.80px;top:568px;font-size:11px;font-weight:bold;color:#22dd22;letter-spacing:-0.207px;background:#000;padding:0 1px 1px 0;margin-left:-1px">Min = 11.7 (AFR)</div>
<div class="t" style="left:5.80px;top:578px;font-size:11px;font-weight:bold;color:#e02828;letter-spacing:-0.067px;background:#000;padding:0 1px 1px 0;margin-left:-1px">Min = 25.6 (kPa)</div>
<div class="t" style="left:5.80px;top:588px;font-size:11px;font-weight:bold;color:#ffffff;letter-spacing:-0.153px;background:#000;padding:0 1px 1px 0;margin-left:-1px">Min = 1028.0 (RPM)</div>
<div class="t" style="left:329.20px;top:558px;font-size:10px;color:#e8e088;background:#000;padding:0 1px 1px 0">15.3</div>
<div class="t" style="left:329.20px;top:568px;font-size:10px;color:#40c040;background:#000;padding:0 1px 1px 0">15.3</div>
<div class="t" style="left:329.20px;top:578px;font-size:10px;color:#c82828;background:#000;padding:0 1px 1px 0">58.3</div>
<div class="t" style="left:329.20px;top:589px;font-size:10px;color:#e0e0e0;background:#000;padding:0 1px 1px 0">2507.0</div>
</body></html>
